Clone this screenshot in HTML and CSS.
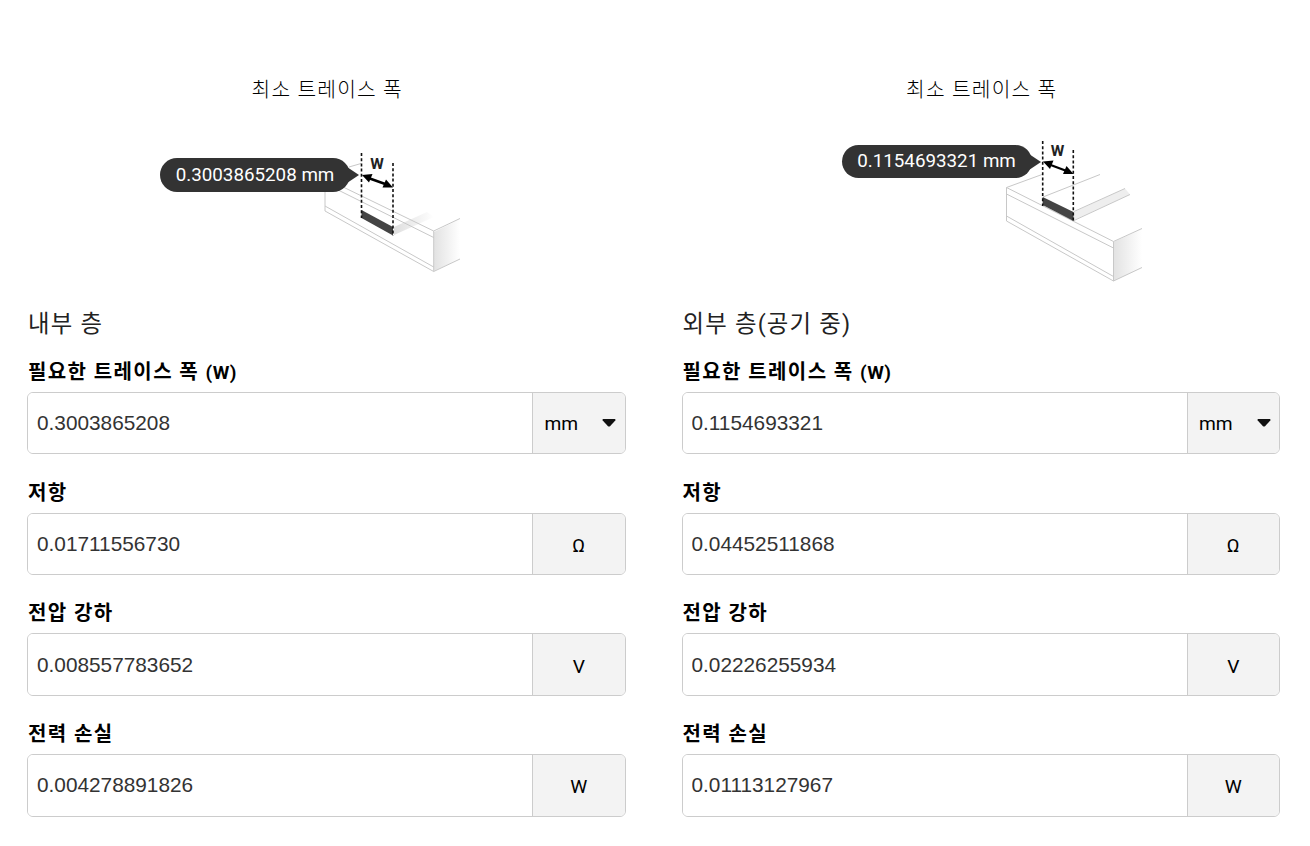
FILE: index.html
```html
<!DOCTYPE html>
<html lang="ko">
<head>
    <meta charset="UTF-8">
    <meta name="viewport" content="width=device-width, initial-scale=1.0">
    <title>트레이스 폭 계산기</title>
    <link rel="stylesheet" href="styles.css">
</head>
<body>
    <div class="results">
        <section class="layer">
            <h3 class="figure-title">최소 트레이스 폭</h3>
            <div class="figure">
                <svg class="diagram" viewBox="27 120 598 180">
                    <defs>
                        <linearGradient id="side" x1="0" y1="0" x2="1" y2="0">
                            <stop offset="0" stop-color="#e2e2e2"/>
                            <stop offset="1" stop-color="#fff"/>
                        </linearGradient>
                        <linearGradient id="shade" x1="0" y1="0" x2="1" y2="0">
                            <stop offset="0" stop-color="#dedede"/>
                            <stop offset="1" stop-color="#fff"/>
                        </linearGradient>
                    </defs>
                    <!-- board -->
                    <path d="M434 232L460 219V259L434 271Z" fill="url(#side)"/>
                    <path d="M394 227L427 212L434 217L394 235Z" fill="url(#shade)"/>
                    <path class="edge" d="M325 190V211L433.700 271.500V231L340 185.500M325 183.500L433.700 237.500M325 206L433.700 267M433.700 231L460 218.500M433.700 271.500L460 259M349 167L361 163.500"/>
                    <!-- trace -->
                    <path d="M361.500 210L393 227V235.500L361.500 218Z" fill="#444"/>
                    <path class="dash" d="M361.500 153V218M393 163V236"/>
                    <!-- width arrow -->
                    <path class="arrow" d="M367 177.500L388 185"/>
                    <path d="M362 175L372.500 174L369 182.500ZM393 187.500L386 179.500L382.500 187.500Z"/>
                    <text class="w" x="377" y="168.500">W</text>
                </svg>
                <div class="bubble bubble-inner">0.3003865208 mm</div>
            </div>
            <h2 class="layer-name">내부 층</h2>
            <div class="field">
                <label class="label" for="w1">필요한 트레이스 폭 <span class="sym">(W)</span></label>
                <div class="group">
                    <input class="value" id="w1" type="text" value="0.3003865208">
                    <div class="unit unit-select">mm<svg class="caret" viewBox="0 0 14 8"><path d="M1.200 0H12.800Q14 .3 13.300 1.500L8 7.200Q7 8 6 7.200L.7 1.500Q0 .3 1.200 0Z"/></svg></div>
                </div>
            </div>
            <div class="field">
                <label class="label" for="r1">저항</label>
                <div class="group">
                    <input class="value" id="r1" type="text" value="0.01711556730">
                    <div class="unit">Ω</div>
                </div>
            </div>
            <div class="field">
                <label class="label" for="v1">전압 강하</label>
                <div class="group">
                    <input class="value" id="v1" type="text" value="0.008557783652">
                    <div class="unit">V</div>
                </div>
            </div>
            <div class="field">
                <label class="label" for="p1">전력 손실</label>
                <div class="group">
                    <input class="value" id="p1" type="text" value="0.004278891826">
                    <div class="unit">W</div>
                </div>
            </div>
        </section>

        <section class="layer">
            <h3 class="figure-title">최소 트레이스 폭</h3>
            <div class="figure">
                <svg class="diagram" viewBox="682 120 598 180">
                    <!-- board -->
                    <path d="M1113.500 242L1142 229V268L1113.500 281Z" fill="url(#side)"/>
                    <path d="M1074 212L1125 188.500L1130 194.500L1074 220Z" fill="#eee"/>
                    <path class="edge" d="M1006.500 187.500V221L1113.500 281V241.500ZM1006.500 194L1113.500 248M1006.500 216L1113.500 276.500M1006.500 187.500L1042 174.500M1043 197L1100 174.500M1074 211.500L1125 188.500M1074 220.500L1130 194.500M1113.500 241.500L1142 228.500M1113.500 281L1142 267.500"/>
                    <!-- trace -->
                    <path d="M1042.700 197L1073.500 212V221L1042.700 205Z" fill="#444"/>
                    <path class="dash" d="M1042.700 141V206M1073.300 150V221"/>
                    <!-- width arrow -->
                    <path class="arrow" d="M1048 164L1068 171.500"/>
                    <path d="M1043 161.500L1053.500 160.500L1050 169ZM1073.500 174L1066.500 166L1063 174Z"/>
                    <text class="w" x="1057.500" y="156">W</text>
                </svg>
                <div class="bubble bubble-outer">0.1154693321 mm</div>
            </div>
            <h2 class="layer-name">외부 층(공기 중)</h2>
            <div class="field">
                <label class="label" for="w2">필요한 트레이스 폭 <span class="sym">(W)</span></label>
                <div class="group">
                    <input class="value" id="w2" type="text" value="0.1154693321">
                    <div class="unit unit-select">mm<svg class="caret" viewBox="0 0 14 8"><path d="M1.200 0H12.800Q14 .3 13.300 1.500L8 7.200Q7 8 6 7.200L.7 1.500Q0 .3 1.200 0Z"/></svg></div>
                </div>
            </div>
            <div class="field">
                <label class="label" for="r2">저항</label>
                <div class="group">
                    <input class="value" id="r2" type="text" value="0.04452511868">
                    <div class="unit">Ω</div>
                </div>
            </div>
            <div class="field">
                <label class="label" for="v2">전압 강하</label>
                <div class="group">
                    <input class="value" id="v2" type="text" value="0.02226255934">
                    <div class="unit">V</div>
                </div>
            </div>
            <div class="field">
                <label class="label" for="p2">전력 손실</label>
                <div class="group">
                    <input class="value" id="p2" type="text" value="0.01113127967">
                    <div class="unit">W</div>
                </div>
            </div>
        </section>
    </div>
</body>
</html>
```
FILE: styles.css
```css
* {
    box-sizing: border-box;
}
body {
    margin: 0;
    background: #fff;
    color: #000;
    font-family: Roboto, "Noto Sans CJK KR", sans-serif;
    font-size: 19.2px;
}
.results {
    display: grid;
    grid-template-columns: 1fr 1fr;
    column-gap: 56px;
    padding: 70px 30px 0 27px;
}
.figure-title {
    margin: 0;
    padding-left: 2px;
    height: 50px;
    line-height: 40px;
    font-size: 20.3px;
    font-weight: 300;
    letter-spacing: 1.2px;
    text-align: center;
}
.figure {
    position: relative;
    height: 180px;
}
.diagram {
    display: block;
    width: 598px;
    height: 180px;
}
.edge {
    fill: none;
    stroke: #c8c8c8;
    stroke-width: 1;
}
.dash {
    fill: none;
    stroke: #111;
    stroke-width: 1.6;
    stroke-dasharray: 3 2.2;
}
.arrow {
    stroke: #000;
    stroke-width: 2.4;
}
.w {
    font-size: 15.5px;
    font-weight: 700;
    text-anchor: middle;
    fill: #222;
}
.bubble {
    position: absolute;
    width: 190px;
    height: 34px;
    border-radius: 17px;
    background: #333;
    color: #fff;
    font-size: 18.8px;
    line-height: 34px;
    text-align: center;
    white-space: nowrap;
}
.bubble::after {
    content: "";
    position: absolute;
    right: -9px;
    top: 9px;
    border: 8px solid transparent;
    border-left: 12px solid #333;
    border-right: 0;
}
.bubble-inner {
    left: 133px;
    top: 38px;
}
.bubble-outer {
    left: 160px;
    top: 25px;
    height: 33px;
    line-height: 32px;
}
.layer-name {
    margin: 0;
    padding-left: 1px;
    height: 53px;
    line-height: 48px;
    font-size: 23.4px;
    font-weight: 400;
    letter-spacing: 1.2px;
    color: #222;
}
.field {
    height: 120.7px;
}
.label {
    display: block;
    padding-left: 1px;
    height: 39px;
    line-height: 38px;
    font-size: 20px;
    font-weight: 700;
    letter-spacing: 1.4px;
}
.sym {
    font-size: 19px;
    letter-spacing: .5px;
}
.group {
    display: flex;
    height: 62.45px;
    border: 1px solid #ccc;
    border-radius: 6px;
    overflow: hidden;
}
.value {
    flex: 1;
    min-width: 0;
    border: 0;
    padding: 0 9px;
    background: #fff;
    color: #333;
    font-family: "Liberation Sans", Arial, sans-serif;
    font-size: 20.8px;
}
.unit {
    display: flex;
    align-items: center;
    justify-content: center;
    width: 92.5px;
    padding-top: 3px;
    border-left: 1px solid #ccc;
    background: #f3f3f3;
}
.unit-select {
    justify-content: space-between;
    padding: 0 8.5px 0 11.5px;
}
.caret {
    width: 14px;
    height: 8px;
    fill: #111;
}
```
